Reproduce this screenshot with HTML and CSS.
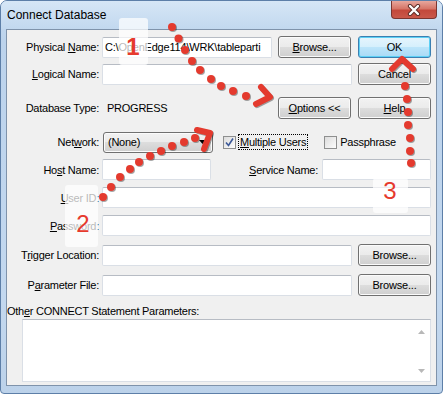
FILE: index.html
```html
<!DOCTYPE html>
<html lang="en">
<head>
  <meta charset="UTF-8" />
  <title>Connect Database</title>
  <link rel="stylesheet" href="styles.css">
</head>
<body>
  <div class="window">
    <div class="titlebar">
      <span class="title">Connect Database</span>
      <div class="close">
        <svg width="16" height="12" viewBox="0 0 16 12">
          <path d="M4 2 L12 10 M12 2 L4 10" stroke="#5a2a25" stroke-width="4.2" stroke-linecap="round"/>
          <path d="M4 2 L12 10 M12 2 L4 10" stroke="#fff" stroke-width="2.4" stroke-linecap="round"/>
        </svg>
      </div>
    </div>

    <div class="client">
      <div class="row r1">
        <label class="lbl">Physical <u>N</u>ame:</label>
        <input class="field w170" type="text" value="C:\OpenEdge114\WRK\tableparti" />
        <button class="btn"><u>B</u>rowse...</button>
        <button class="btn ok">OK</button>
      </div>

      <div class="row r2">
        <label class="lbl"><u>L</u>ogical Name:</label>
        <input class="field w250" type="text" />
        <button class="btn">Cancel</button>
      </div>

      <div class="row r3">
        <label class="lbl">Database Type:</label>
        <span class="dbtype">PROGRESS</span>
        <button class="btn"><u>O</u>ptions &lt;&lt;</button>
        <button class="btn"><u>H</u>elp</button>
      </div>

      <div class="row r4">
        <label class="lbl">Net<u>w</u>ork:</label>
        <div class="combo">
          <span>(None)</span>
          <svg width="7" height="4" viewBox="0 0 7 4"><path d="M0 0 H7 L3.5 4 Z" fill="#000"/></svg>
        </div>
        <div class="check first">
          <span class="box">
            <svg width="11" height="11" viewBox="0 0 11 11"><path d="M2 5.5 L4.5 8.5 L9 1.5" stroke="#3d5a99" stroke-width="1.6" fill="none"/></svg>
          </span>
          <span class="focus"><u>M</u>ultiple Users</span>
        </div>
        <div class="check second">
          <span class="box"></span>
          <span>Passphrase</span>
        </div>
      </div>

      <div class="row r5">
        <label class="lbl">Ho<u>s</u>t Name:</label>
        <input class="field w109" type="text" />
        <label class="lbl svc"><u>S</u>ervice Name:</label>
        <input class="field w109" type="text" />
      </div>

      <div class="row r6">
        <label class="lbl"><u>U</u>ser ID:</label>
        <input class="field wide" type="text" />
      </div>

      <div class="row r7">
        <label class="lbl"><u>P</u>assword:</label>
        <input class="field wide" type="password" />
      </div>

      <div class="row r8">
        <label class="lbl">T<u>r</u>igger Location:</label>
        <input class="field w250" type="text" />
        <button class="btn">Browse...</button>
      </div>

      <div class="row r9">
        <label class="lbl">P<u>a</u>rameter File:</label>
        <input class="field w250" type="text" />
        <button class="btn">Browse...</button>
      </div>

      <div class="other">Oth<u>e</u>r CONNECT Statement Parameters:</div>

      <div class="memo">
        <div class="memo-text"></div>
        <div class="scroll">
          <svg width="7" height="4" viewBox="0 0 7 4"><path d="M0 4 H7 L3.5 0 Z" fill="#b8b8b8"/></svg>
          <svg width="7" height="4" viewBox="0 0 7 4"><path d="M0 0 H7 L3.5 4 Z" fill="#b8b8b8"/></svg>
        </div>
      </div>
    </div>

    <!-- tutorial marks drawn over the dialog -->
    <svg class="marks" width="444" height="394" viewBox="0 0 444 394">
      <rect x="119" y="18" width="29" height="47" rx="3" fill="rgba(255,255,255,0.72)"/>
      <rect x="65" y="185" width="33" height="62" rx="3" fill="rgba(255,255,255,0.72)"/>
      <rect x="373" y="178" width="35" height="35" rx="3" fill="rgba(255,255,255,0.72)"/>

      <text x="133" y="55" class="num bold">1</text>
      <text x="83" y="232" class="num">2</text>
      <text x="390" y="199" class="num">3</text>

      <g class="dots">
        <circle cx="172" cy="27" r="4"/>
        <circle cx="178.5" cy="38.5" r="4"/>
        <circle cx="185" cy="50" r="4"/>
        <circle cx="192" cy="61" r="4"/>
        <circle cx="200" cy="70" r="4"/>
        <circle cx="211" cy="79" r="4"/>
        <circle cx="221" cy="86" r="4"/>
        <circle cx="233" cy="91" r="4"/>
        <circle cx="246" cy="96" r="4"/>
        <polyline points="261,87 270,97 256,104"/>

        <circle cx="103" cy="197" r="4"/>
        <circle cx="111" cy="187" r="4"/>
        <circle cx="120" cy="177" r="4"/>
        <circle cx="130" cy="169" r="4"/>
        <circle cx="139" cy="162" r="4"/>
        <circle cx="150" cy="156" r="4"/>
        <circle cx="161" cy="151" r="4"/>
        <circle cx="172" cy="146" r="4"/>
        <circle cx="184" cy="142" r="4"/>
        <circle cx="195" cy="138" r="4"/>
        <polyline points="197,130 210,133 204,149"/>

        <circle cx="411" cy="163" r="4"/>
        <circle cx="410" cy="151" r="4"/>
        <circle cx="410" cy="138" r="4"/>
        <circle cx="408" cy="125" r="4"/>
        <circle cx="408" cy="112" r="4"/>
        <circle cx="407" cy="99" r="4"/>
        <circle cx="405" cy="86" r="4"/>
        <polyline points="392,69 402,59 413,69"/>
      </g>
    </svg>
  </div>
</body>
</html>
```

FILE: styles.css
```css
body {
  margin: 0;
  background: #fff;
  font-family: 'Liberation Sans', Arial, sans-serif;
  font-size: 11px;
  letter-spacing: -0.25px;
  color: #000;
}

.window {
  position: relative;
  width: 443px;
  height: 394px;
  box-sizing: border-box;
  border: 1px solid #5d7fa8;
  border-radius: 7px 7px 4px 4px;
  background: linear-gradient(#c9ddf2, #bcd3ec 40px, #c3d8ef 300px, #bcd2ea);
  overflow: hidden;
}

.titlebar {
  height: 28px;
  display: flex;
  justify-content: space-between;
  align-items: flex-start;
  background: linear-gradient(#d6e6f6, #c2d8ef);
}

.title {
  font-size: 12px;
  letter-spacing: 0;
  padding: 7px 0 0 6px;
  line-height: 14px;
}

.close {
  width: 46px;
  height: 18px;
  margin-right: 5px;
  box-sizing: border-box;
  border: 1px solid #7a3530;
  border-top: none;
  border-radius: 0 0 4px 4px;
  background: linear-gradient(#e7a79d, #d67668 45%, #c3483b 55%, #c9584a);
  display: flex;
  align-items: center;
  justify-content: center;
}

.client {
  margin: 0 5px 0 5px;
  height: 357px;
  box-sizing: border-box;
  border: 1px solid #7f93ab;
  background: #f0f0f0;
  padding-top: 6px;
}

.row {
  display: flex;
  align-items: center;
  height: 22px;
}

.r2 { margin-top: 5px; }
.r3 { margin-top: 12px; }
.r4 { margin-top: 12px; }
.r5 { margin-top: 6px; height: 21px; }
.r6 { margin-top: 7px; height: 21px; }
.r7 { margin-top: 7px; height: 21px; }
.r8 { margin-top: 8px; }
.r9 { margin-top: 8px; }

.lbl {
  width: 92px;
  flex: none;
  text-align: right;
  margin-right: 3px;
  white-space: nowrap;
}

.lbl.svc {
  width: 107px;
  margin-right: 4px;
}

.field {
  height: 21px;
  box-sizing: border-box;
  border: 1px solid #dadfe6;
  border-top-color: #b7bcc4;
  border-radius: 2px;
  background: #fff;
  font-family: inherit;
  font-size: 11px;
  letter-spacing: -0.2px;
  padding: 0 2px;
  margin: 0;
  outline: none;
}

.w170 { width: 170px; }
.w250 { width: 250px; }
.w109 { width: 109px; }
.wide { width: 329px; }

.btn {
  width: 73px;
  height: 22px;
  margin: 0 0 0 6px;
  padding: 0;
  box-sizing: border-box;
  border: 1px solid #707070;
  border-radius: 3px;
  background: linear-gradient(#f2f2f2, #ebebeb 50%, #dddddd 50%, #cfcfcf);
  box-shadow: inset 0 0 0 1px #fbfbfb;
  font-family: inherit;
  font-size: 11px;
  letter-spacing: -0.2px;
  color: #000;
}

.btn + .btn {
  margin-left: 7px;
}

.btn.ok {
  border-color: #3c7fb1;
  background: linear-gradient(#e6f5fd, #d5effc 50%, #bde5fa 50%, #a9daf5);
  box-shadow: inset 0 0 0 1px #5dd0f5;
}

.dbtype {
  width: 176px;
  padding-left: 5px;
  box-sizing: border-box;
  flex: none;
}

.r3 .btn:first-of-type {
  margin-left: 0;
}

.combo {
  width: 110px;
  height: 21px;
  margin-left: 1px;
  box-sizing: border-box;
  border: 1px solid #707070;
  border-radius: 3px;
  background: linear-gradient(#f2f2f2, #ebebeb 50%, #dddddd 50%, #cfcfcf);
  box-shadow: inset 0 0 0 1px #fbfbfb;
  display: flex;
  align-items: center;
  justify-content: space-between;
  padding: 0 6px 0 4px;
}

.check {
  display: flex;
  align-items: center;
}

.check.first { margin-left: 10px; }
.check.second { margin-left: 17px; }

.box {
  width: 13px;
  height: 13px;
  box-sizing: border-box;
  border: 1px solid #8e8f8f;
  background: linear-gradient(135deg, #dcdcdc, #fdfdfd);
  margin-right: 3px;
  display: flex;
  align-items: center;
  justify-content: center;
}

.focus {
  outline: 1px dotted #000;
  padding: 1px 1px;
}

.other {
  margin-top: 8px;
  height: 14px;
  line-height: 14px;
}

.memo {
  margin: 1px 0 0 15px;
  width: 409px;
  height: 63px;
  box-sizing: border-box;
  border: 1px solid #dadfe6;
  border-top-color: #b7bcc4;
  background: #fff;
  display: flex;
}

.memo-text {
  flex: 1;
}

.scroll {
  width: 17px;
  display: flex;
  flex-direction: column;
  justify-content: space-between;
  align-items: center;
  padding: 10px 0 8px;
}

.marks {
  position: absolute;
  top: -1px;
  left: -1px;
  pointer-events: none;
}

.num {
  font-family: 'Liberation Sans', Arial, sans-serif;
  font-size: 24px;
  letter-spacing: 0;
  fill: #e63a2d;
  text-anchor: middle;
}

.num.bold {
  font-weight: bold;
}

.dots {
  fill: #e43a2e;
  stroke: #e43a2e;
  stroke-width: 0;
  filter: drop-shadow(1px 1px 0.6px rgba(0, 0, 0, 0.35));
}

.dots polyline {
  fill: none;
  stroke-width: 6;
  stroke-linecap: round;
  stroke-linejoin: round;
}
```
